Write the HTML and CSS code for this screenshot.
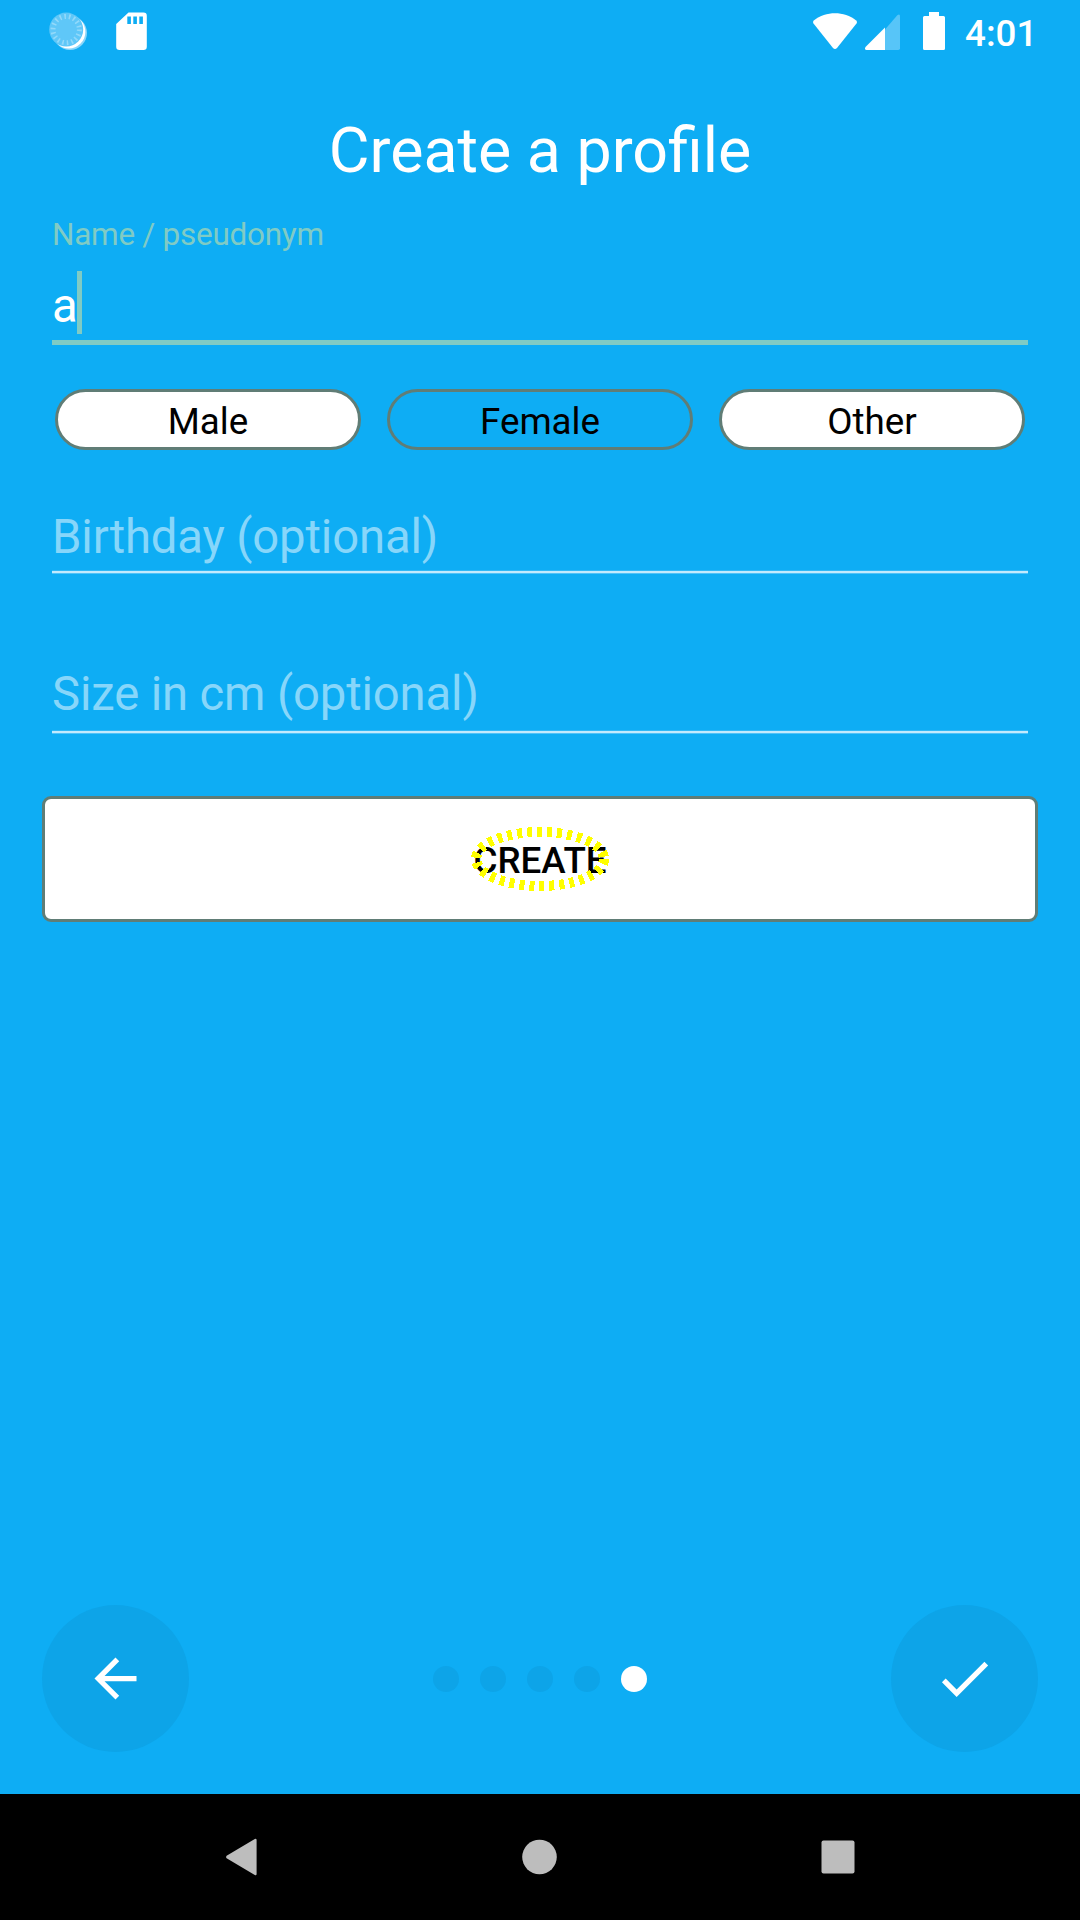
FILE: index.html
```html
<!DOCTYPE html>
<html lang="en">
<head>
<meta charset="utf-8">
<title>Create a profile</title>
<link rel="stylesheet" href="styles.css">
</head>
<body>
<div class="screen">
  <header class="status">
    <svg class="status-left" width="120" height="63" viewBox="40 0 120 63">
      <circle cx="70" cy="33" r="17" fill="#8ad6fa"/>
      <circle cx="68.8" cy="31.8" r="16.6" fill="#fff"/>
      <circle cx="66.2" cy="29.6" r="17" fill="#5fc7f8"/>
      <circle cx="66.2" cy="29.6" r="13.2" fill="none" stroke="#92d9fa" stroke-width="5" stroke-dasharray="1.6 3.01"/>
      <path d="M128.5 12.5h15a3.3 3.3 0 0 1 3.3 3.3v31a3.3 3.3 0 0 1-3.3 3.3h-24a3.3 3.3 0 0 1-3.3-3.3V24z" fill="#fff"/>
      <path d="M127.3 16.5h3.6v7.6h-3.6zM133.3 16.5h3.6v7.6h-3.6zM139.3 16.5h3.6v7.6h-3.6z" fill="#0eadf4"/>
    </svg>
    <svg class="status-right" width="148" height="63" viewBox="808 0 148 63">
      <path d="M813.8 20.4C826 10.7 844 10.7 856.2 20.4Q857.8 21.8 856.5 23.5L837.2 47.7Q835 50.3 832.8 47.7L813.5 23.5Q812.2 21.8 813.8 20.4Z" fill="#fff"/>
      <path d="M885 29.5L897.3 15.3Q900 13.3 900 16.5V48.3Q900 50 898.3 50H885z" fill="#57c5f8"/>
      <path d="M885 27.5V50H866.6Q864 49.5 865.5 47z" fill="#fff"/>
      <path d="M929 12h10v4h4.5a1.5 1.5 0 0 1 1.5 1.5v31a1.5 1.5 0 0 1-1.5 1.5h-19a1.5 1.5 0 0 1-1.5-1.5v-31a1.5 1.5 0 0 1 1.5-1.5h4.5z" fill="#fff"/>
    </svg>
    <span class="clock">4:01</span>
  </header>

  <main class="form">
    <h1 class="title">Create a profile</h1>
    <div class="field field-name">
      <span class="label">Name / pseudonym</span>
      <div class="value">a<span class="caret"></span></div>
    </div>
    <div class="choices">
      <div class="pill">Male</div>
      <div class="pill selected">Female</div>
      <div class="pill">Other</div>
    </div>
    <div class="field field-birthday">Birthday (optional)</div>
    <div class="field field-size">Size in cm (optional)</div>
    <div class="create">
      CREATE
      <svg class="highlight" width="140" height="68" viewBox="0 0 140 68" shape-rendering="crispEdges">
        <ellipse cx="70" cy="34" rx="64" ry="27" fill="none" stroke="#ff0" stroke-width="10" stroke-dasharray="5 5"/>
      </svg>
    </div>
  </main>

  <div class="pager">
    <div class="round">
      <svg width="63" height="63" viewBox="0 0 24 24"><path fill="#fff" d="M20 11H7.83l5.59-5.59L12 4l-8 8 8 8 1.41-1.41L7.83 13H20z"/></svg>
    </div>
    <div class="dots"><i class="dot"></i><i class="dot"></i><i class="dot"></i><i class="dot"></i><i class="dot active"></i></div>
    <div class="round">
      <svg width="63" height="63" viewBox="0 0 24 24"><path fill="#fff" d="M9 16.17L4.83 12l-1.42 1.41L9 19 21 7l-1.41-1.41z"/></svg>
    </div>
  </div>

  <nav class="navbar">
    <svg width="34" height="40" viewBox="0 0 34 40"><path d="M31.6 2.8V37.2Q31.3 38.8 29.8 37.9L1.6 21.3Q.6 20 1.6 18.7L29.8 2.1Q31.3 1.2 31.6 2.8Z" fill="#bdbdbd"/></svg>
    <svg width="36" height="36" viewBox="0 0 36 36"><circle cx="17.5" cy="18" r="17.3" fill="#bdbdbd"/></svg>
    <svg width="34" height="34" viewBox="0 0 34 34"><rect x=".5" y=".5" width="33" height="33" rx="2" fill="#bdbdbd"/></svg>
  </nav>
</div>
</body>
</html>
```

FILE: styles.css
```css
* { box-sizing: border-box; }

body {
  margin: 0;
  font-family: Roboto, sans-serif;
  background: #0eadf4;
}

svg { display: block; }

.screen {
  width: 1080px;
  height: 1920px;
  display: flex;
  flex-direction: column;
  overflow: hidden;
  background: #0eadf4;
  color: #fff;
}

.status {
  height: 63px;
  flex: none;
  display: flex;
  padding: 0 48px 0 40px;
}

.status-right { margin-left: auto; }

.clock {
  width: 76px;
  padding: 12px 0 0 9px;
  font-size: 36.75px;
  line-height: 43px;
  font-weight: 500;
}

.form {
  flex: 1;
  padding: 51px 42px 0;
}

.title {
  margin: 0;
  font-size: 62.7px;
  line-height: 74px;
  font-weight: 400;
  text-align: center;
}

.field {
  margin: 0 10px;
  font-size: 47.25px;
  line-height: 56px;
  letter-spacing: -0.15px;
}

.field-name {
  height: 129px;
  margin-top: 28px;
  border-bottom: 5px solid #80cbc4;
}

.label {
  display: block;
  color: #80cbc4;
  font-size: 31.5px;
  line-height: 37px;
  letter-spacing: -0.28px;
}

.value {
  display: flex;
  margin-top: 25px;
}

.caret {
  width: 5px;
  height: 63px;
  margin: -7px 0 0 -1px;
  background: #80cbc4;
}

.choices {
  display: flex;
  gap: 26px;
  margin: 44px 13px 0;
}

.pill {
  flex: 1;
  height: 61px;
  padding-top: 5px;
  border: 3px solid #607d76;
  border-radius: 31px;
  background: #fff;
  color: #000;
  font-size: 36.75px;
  line-height: 49px;
  text-align: center;
}

.pill.selected { background: none; }

.field-birthday,
.field-size {
  color: #87d6fa;
  border-bottom: 2px solid #c3eafd;
  box-shadow: 0 1px #4fc2f8, inset 0 -1px #2fb8f7;
}

.field-birthday {
  height: 64px;
  margin-top: 59px;
}

.field-size {
  height: 67px;
  margin-top: 93px;
}

.create {
  position: relative;
  height: 126px;
  margin-top: 63px;
  padding-top: 2px;
  display: flex;
  align-items: center;
  justify-content: center;
  border: 3px solid #607d76;
  border-radius: 9px;
  background: #fff;
  color: #000;
  font-size: 36.75px;
  font-weight: 500;
  line-height: 43px;
}

.highlight {
  position: absolute;
  left: 425px;
  top: 26px;
}

.pager {
  height: 189px;
  flex: none;
  display: flex;
  align-items: flex-start;
  justify-content: space-between;
  padding: 0 42px;
}

.round {
  width: 147px;
  height: 147px;
  display: flex;
  align-items: center;
  justify-content: center;
  border-radius: 50%;
  background: #0da4e8;
}

.dots {
  height: 147px;
  display: flex;
  align-items: center;
  gap: 21px;
}

.dot {
  width: 26px;
  height: 26px;
  border-radius: 50%;
  background: #0da4e8;
}

.dot.active { background: #fff; }

.navbar {
  height: 126px;
  flex: none;
  display: flex;
  align-items: center;
  justify-content: space-between;
  padding: 0 225px;
  background: #000;
}
```
